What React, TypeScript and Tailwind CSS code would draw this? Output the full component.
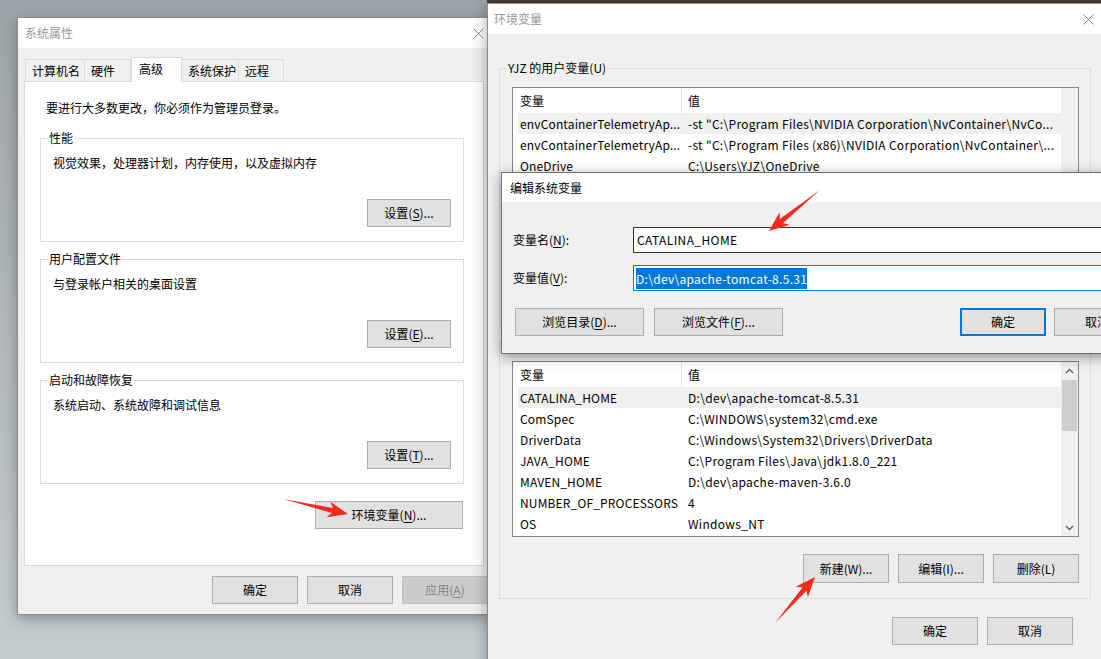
import React from "react"

const cn = (...c: (string | false | undefined | null)[]) => c.filter(Boolean).join(" ")

function CloseX() {
  return (
    <svg width="11" height="11" viewBox="0 0 11 11">
      <path d="M0.5 0.5L10.5 10.5M10.5 0.5L0.5 10.5" stroke="#8a8a8a" strokeWidth="1" />
    </svg>
  )
}

function Key({ k }: { k: string }) {
  return <span className="underline underline-offset-[2px] decoration-1">{k}</span>
}

type BtnProps = { children: React.ReactNode; className?: string; variant?: "default" | "primary" | "disabled" }

function Btn({ children, className, variant = "default" }: BtnProps) {
  return (
    <div
      className={cn(
        "flex items-center justify-center h-[28px] shrink-0 whitespace-nowrap",
        variant === "default" && "bg-[#e1e1e1] border border-[#adadad] text-black",
        variant === "primary" && "bg-[#e1e1e1] border-2 border-[#0078d7] text-black",
        variant === "disabled" && "bg-[#cccccc] border border-[#bfbfbf] text-[#838383]",
        className,
      )}
    >
      {children}
    </div>
  )
}

function Group({ label, labelBg, className, children }: { label: React.ReactNode; labelBg: string; className?: string; children?: React.ReactNode }) {
  return (
    <div className={cn("relative border border-[#dcdcdc] shrink-0", className)}>
      <span className={cn("absolute -top-[9px] left-[7px] px-[1px] leading-[16px] whitespace-nowrap", labelBg)}>{label}</span>
      {children}
    </div>
  )
}

function Chevron({ up }: { up?: boolean }) {
  return (
    <svg width="9" height="6" viewBox="0 0 9 6">
      <path d={up ? "M1 5L4.5 1.5L8 5" : "M1 1L4.5 4.5L8 1"} stroke="#606060" strokeWidth="1.4" fill="none" />
    </svg>
  )
}

function VarList({ rows, scroll }: { rows: [string, string][]; scroll?: boolean }) {
  return (
    <div className="flex border border-[#828790] bg-white h-[176px] w-[567px] ml-[12px] mt-[18px] overflow-hidden">
      <div className="flex-1 pl-[5px] flex flex-col overflow-hidden">
        <div className="flex h-[25px] shrink-0">
          <div className="w-[164px] pl-[2px] border-r border-[#e5e5e5] flex items-center">变量</div>
          <div className="flex-1 pl-[6px] flex items-center">值</div>
        </div>
        {rows.map((r, i) => (
          <div key={i} className={cn("flex h-[21px] items-center shrink-0", i === 0 && "bg-[#f0f0f0]")}>
            <div className="w-[164px] pl-[2px] whitespace-nowrap overflow-hidden tracking-[0.15px]">{r[0]}</div>
            <div className="flex-1 pl-[6px] whitespace-nowrap overflow-hidden tracking-[0.3px]">{r[1]}</div>
          </div>
        ))}
      </div>
      <div className="w-[17px] bg-[#f0f0f0] flex flex-col items-center shrink-0">
        {scroll && (
          <>
            <div className="h-[17px] flex items-center justify-center">
              <Chevron up />
            </div>
            <div className="w-[15px] h-[51px] bg-[#cdcdcd] mt-[1px]" />
            <div className="flex-1" />
            <div className="h-[17px] flex items-center justify-center">
              <Chevron />
            </div>
          </>
        )}
      </div>
    </div>
  )
}

function arrowPoints(tx: number, ty: number, px: number, py: number) {
  const dx = px - tx
  const dy = py - ty
  const L = Math.hypot(dx, dy)
  const ux = dx / L
  const uy = dy / L
  const nx = -uy
  const ny = ux
  const pt = (a: number, b: number) => `${(tx + ux * a + nx * b).toFixed(1)},${(ty + uy * a + ny * b).toFixed(1)}`
  const h = 20
  return [pt(0, 0), pt(L - h + 4, -2.6), pt(L - h, -8), pt(L, 0), pt(L - h, 8), pt(L - h + 4, 2.6)].join(" ")
}

const userVars: [string, string][] = [
  ["envContainerTelemetryAp...", '-st "C:\\Program Files\\NVIDIA Corporation\\NvContainer\\NvCo...'],
  ["envContainerTelemetryAp...", '-st "C:\\Program Files (x86)\\NVIDIA Corporation\\NvContainer\\...'],
  ["OneDrive", "C:\\Users\\YJZ\\OneDrive"],
  ["Path", "C:\\Users\\YJZ\\AppData\\Local\\Microsoft\\WindowsApps;"],
  ["TEMP", "C:\\Users\\YJZ\\AppData\\Local\\Temp"],
  ["TMP", "C:\\Users\\YJZ\\AppData\\Local\\Temp"],
]

const sysVars: [string, string][] = [
  ["CATALINA_HOME", "D:\\dev\\apache-tomcat-8.5.31"],
  ["ComSpec", "C:\\WINDOWS\\system32\\cmd.exe"],
  ["DriverData", "C:\\Windows\\System32\\Drivers\\DriverData"],
  ["JAVA_HOME", "C:\\Program Files\\Java\\jdk1.8.0_221"],
  ["MAVEN_HOME", "D:\\dev\\apache-maven-3.6.0"],
  ["NUMBER_OF_PROCESSORS", "4"],
  ["OS", "Windows_NT"],
]

const tabs = [
  { label: "计算机名", w: "w-[60px]" },
  { label: "硬件", w: "w-[47px]" },
  { label: "高级", w: "w-[51px]", active: true },
  { label: "系统保护", w: "w-[58px]" },
  { label: "远程", w: "w-[46px]" },
]

export default function App() {
  return (
    <div className="relative w-[1101px] h-[659px] overflow-hidden bg-linear-to-b from-[#9ea5aa] to-[#c6cdd0] text-[12px] leading-[16px] text-black font-['Microsoft_YaHei_UI','Noto_Sans_CJK_SC',sans-serif]">
      {/* wallpaper strip */}
      <div className="absolute left-[487px] top-0 w-[614px] h-[4px] bg-[#4d4039]" />

      {/* 系统属性 */}
      <div className="absolute left-[17px] top-[17px] w-[477px] h-[598px] border border-[#8c8c8c] flex flex-col bg-[#f0f0f0] shadow-[0_4px_14px_rgba(0,0,0,0.3)]">
        <div className="h-[30px] bg-white flex items-center justify-between pl-[7px] pr-[9px] shrink-0">
          <span className="text-[#999999]">系统属性</span>
          <CloseX />
        </div>
        <div className="flex flex-col pt-[9px] px-[6px]">
          <div className="flex items-end h-[24px] pl-[1px]">
            {tabs.map((t) =>
              t.active ? (
                <div key={t.label} className={cn("h-[25px] -mb-px bg-white border border-b-0 border-[#d9d9d9] pl-[7px] pt-[3px] relative z-10", t.w)}>
                  {t.label}
                </div>
              ) : (
                <div key={t.label} className={cn("h-[22px] bg-[#f0f0f0] border border-b-0 border-[#d9d9d9] -ml-px first:ml-0 pl-[6px] flex items-center", t.w)}>
                  {t.label}
                </div>
              ),
            )}
          </div>
          <div className="w-[460px] h-[485px] bg-white border border-[#d9d9d9] flex flex-col">
            <p className="ml-[21px] mt-[18px]">要进行大多数更改，你必须作为管理员登录。</p>
            {[
              { label: "性能", desc: "视觉效果，处理器计划，内存使用，以及虚拟内存", btn: "S", mt: "mt-[22px]" },
              { label: "用户配置文件", desc: "与登录帐户相关的桌面设置", btn: "E", mt: "mt-[17px]" },
              { label: "启动和故障恢复", desc: "系统启动、系统故障和调试信息", btn: "T", mt: "mt-[17px]" },
            ].map((g) => (
              <Group key={g.label} label={g.label} labelBg="bg-white" className={cn("ml-[15px] w-[424px] h-[104px] flex flex-col", g.mt)}>
                <div className="pl-[12px] pt-[16px]">{g.desc}</div>
                <Btn className="self-end mr-[12px] mt-[28px] w-[84px]">
                  设置(<Key k={g.btn} />)...
                </Btn>
              </Group>
            ))}
            <Btn className="self-end mr-[20px] mt-[17px] w-[148px]">
              环境变量(<Key k="N" />)...
            </Btn>
          </div>
          <div className="flex mt-[10px] pl-[188px] gap-[9px]">
            <Btn className="w-[86px]">确定</Btn>
            <Btn className="w-[86px]">取消</Btn>
            <Btn className="w-[86px]" variant="disabled">
              应用(<Key k="A" />)
            </Btn>
          </div>
        </div>
      </div>

      {/* 环境变量 */}
      <div className="absolute left-[487px] top-[3px] w-[640px] h-[680px] border border-[#8c8c8c] flex flex-col bg-[#f0f0f0] shadow-[0_0_14px_rgba(0,0,0,0.35)]">
        <div className="h-[30px] bg-white flex items-center justify-between pl-[6px] shrink-0">
          <span className="text-[#999999]">环境变量</span>
          <div className="w-[43px] flex justify-start">
            <CloseX />
          </div>
        </div>
        <div className="flex flex-col pl-[11px]">
          <Group label="YJZ 的用户变量(U)" labelBg="bg-[#f0f0f0]" className="mt-[34px] w-[592px] flex flex-col pb-[15px]">
            <VarList rows={userVars} />
            <div className="flex self-end mr-[11px] mt-[17px] gap-[9px]">
              <Btn className="w-[86px] h-[29px]">新建(N)...</Btn>
              <Btn className="w-[86px] h-[29px]">编辑(E)...</Btn>
              <Btn className="w-[86px] h-[29px]">删除(D)</Btn>
            </div>
          </Group>
          <Group label="系统变量(S)" labelBg="bg-[#f0f0f0]" className="mt-[17px] w-[592px] flex flex-col pb-[15px]">
            <VarList rows={sysVars} scroll />
            <div className="flex self-end mr-[11px] mt-[17px] gap-[9px]">
              <Btn className="w-[86px] h-[29px]">新建(W)...</Btn>
              <Btn className="w-[86px] h-[29px]">编辑(I)...</Btn>
              <Btn className="w-[86px] h-[29px]">删除(L)</Btn>
            </div>
          </Group>
          <div className="w-[592px] flex justify-end pr-[18px] mt-[18px] gap-[9px]">
            <Btn className="w-[86px]">确定</Btn>
            <Btn className="w-[86px]">取消</Btn>
          </div>
        </div>
      </div>

      {/* 编辑系统变量 */}
      <div className="absolute left-[501px] top-[172px] w-[650px] h-[182px] border border-[#6f6f6f] flex flex-col bg-[#f0f0f0] shadow-[0_3px_12px_rgba(0,0,0,0.4)]">
        <div className="h-[29px] bg-white flex items-center pl-[8px] shrink-0">编辑系统变量</div>
        <div className="flex flex-col pl-[11px] pr-[10px]">
          <div className="flex items-center mt-[25px]">
            <span className="w-[120px]">
              变量名(<Key k="N" />):
            </span>
            <div className="w-[507px] h-[26px] border border-[#333333] bg-white flex items-center pl-[3px] tracking-[0.4px]">CATALINA_HOME</div>
          </div>
          <div className="flex items-center mt-[12px]">
            <span className="w-[120px]">
              变量值(<Key k="V" />):
            </span>
            <div className="w-[507px] h-[26px] border border-[#0078d7] bg-white flex items-center pl-[2px]">
              <span className="bg-[#0078d7] text-white leading-[21px] tracking-[0.3px]">D:\dev\apache-tomcat-8.5.31</span>
            </div>
          </div>
          <div className="flex mt-[17px] pl-[2px]">
            <Btn className="w-[129px]">
              浏览目录(<Key k="D" />)...
            </Btn>
            <Btn className="w-[129px] ml-[10px]">
              浏览文件(<Key k="F" />)...
            </Btn>
            <Btn className="w-[86px] ml-auto" variant="primary">
              确定
            </Btn>
            <Btn className="w-[86px] ml-[8px]">取消</Btn>
          </div>
        </div>
      </div>

      {/* annotation arrows */}
      <svg className="absolute inset-0 pointer-events-none" width="1101" height="659">
        <polygon points={arrowPoints(283, 499, 348, 514)} fill="#f52a1e" />
        <polygon points={arrowPoints(820, 190, 769, 231)} fill="#f52a1e" />
        <polygon points={arrowPoints(775, 623, 815, 577)} fill="#f52a1e" />
      </svg>
    </div>
  )
}
